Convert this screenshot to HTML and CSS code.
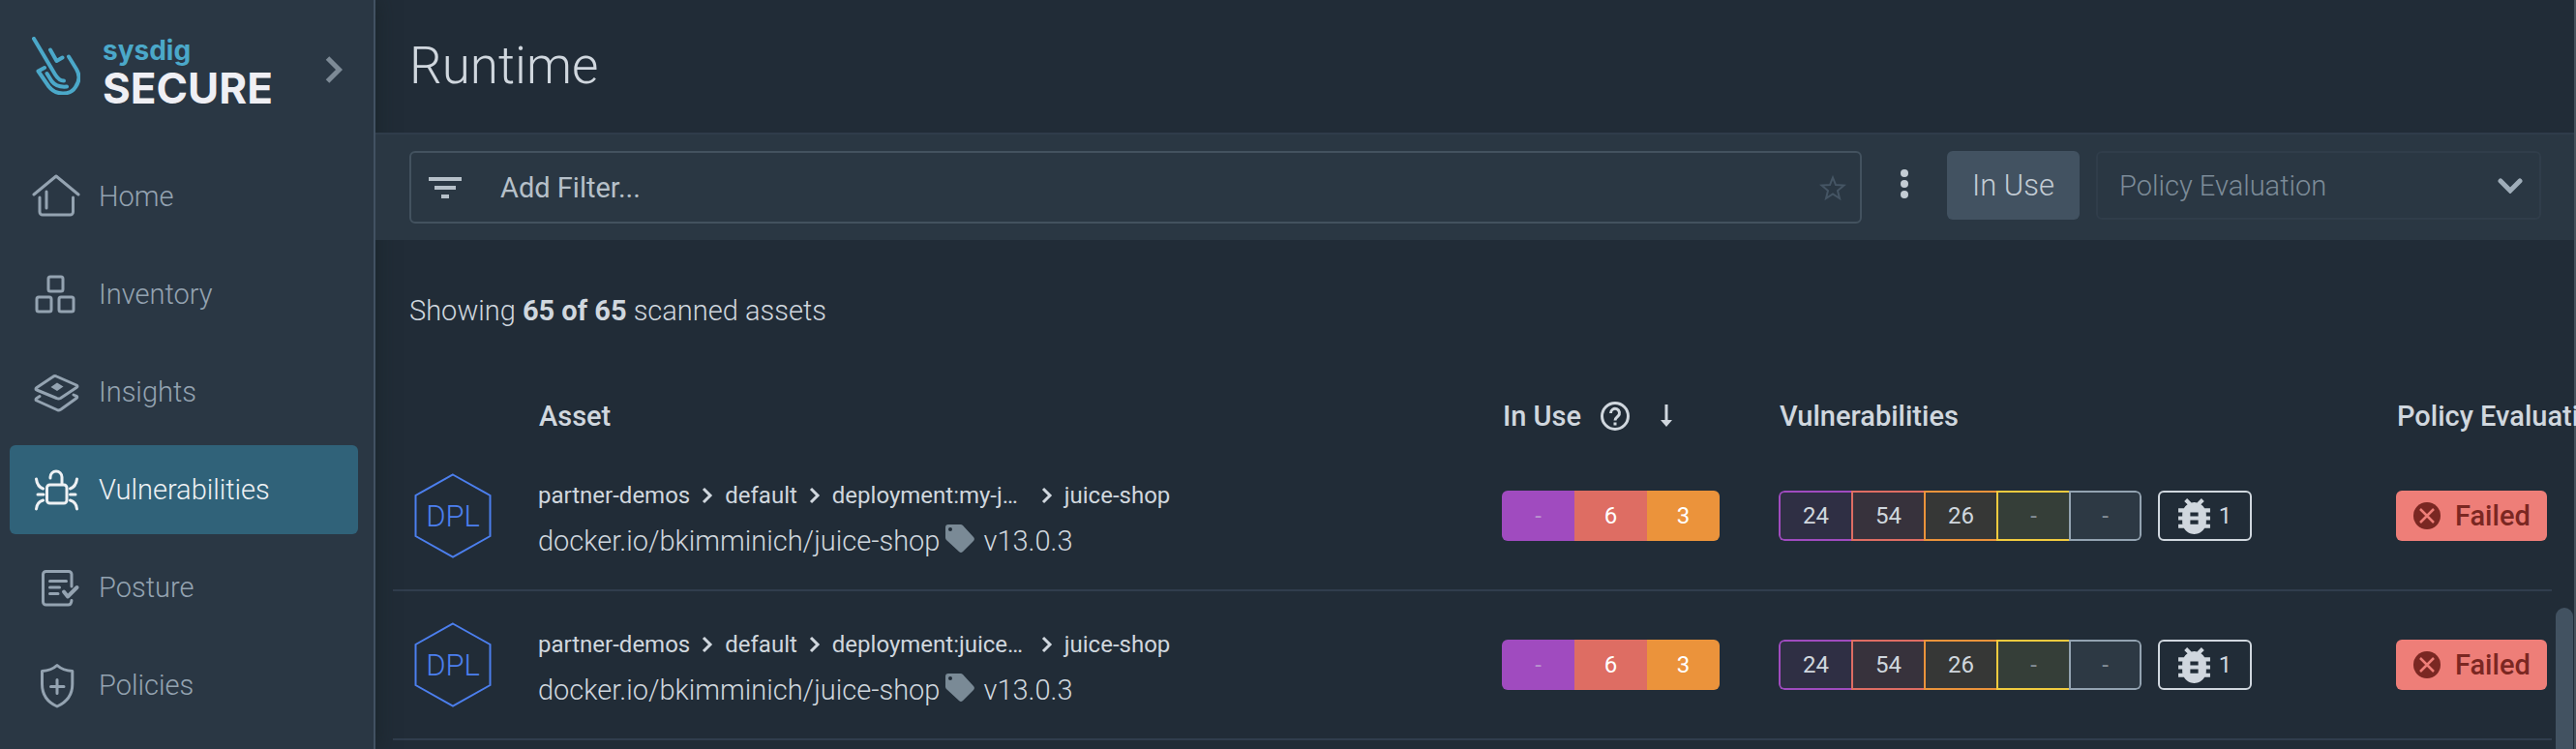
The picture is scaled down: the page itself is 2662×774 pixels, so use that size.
FILE: index.html
```html
<!DOCTYPE html>
<html lang="en">
<head>
<meta charset="utf-8">
<title>Sysdig Secure - Runtime</title>
<link rel="stylesheet" href="styles.css">
</head>
<body>
<svg class="sprite" aria-hidden="true">
  <symbol id="chevron" viewBox="0 0 12 18"><path d="M2 2l7 7-7 7" fill="none" stroke="currentColor" stroke-width="3"/></symbol>
  <symbol id="tag" viewBox="0 0 30 30"><path d="M0 3a3 3 0 0 1 3-3h12a4 4 0 0 1 3 1l11 12a3 3 0 0 1 0 4L18 28a3 3 0 0 1-4 0L1 16a4 4 0 0 1-1-3zM5 3a2 2 0 1 0 0 4 2 2 0 0 0 0-4z" fill="currentColor" fill-rule="evenodd"/></symbol>
  <symbol id="bug" viewBox="4 3 16 18"><path d="M20 8h-2.81a5.985 5.985 0 0 0-1.82-1.96L17 4.41 15.59 3l-2.17 2.17a6.002 6.002 0 0 0-2.83 0L8.41 3 7 4.41l1.62 1.63C7.88 6.55 7.26 7.22 6.81 8H4v2h2.09c-.05.33-.09.66-.09 1v1H4v2h2v1c0 .34.04.67.09 1H4v2h2.81c1.04 1.79 2.97 3 5.19 3s4.15-1.21 5.19-3H20v-2h-2.09c.05-.33.09-.66.09-1v-1h2v-2h-2v-1c0-.34-.04-.67-.09-1H20V8zm-6 8h-4v-2h4v2zm0-4h-4v-2h4v2z" fill="currentColor"/></symbol>
  <symbol id="failed" viewBox="0 0 28 28"><circle cx="14" cy="14" r="14" fill="currentColor"/><path d="M7 7l14 14M21 7L7 21" stroke="#ee7e78" stroke-width="2.500"/></symbol>
</svg>
<div class="app">
  <aside class="sidebar">
    <div class="brand">
      <svg class="brand-mark" viewBox="0 0 50 60" aria-hidden="true"><path d="M2 2L24 39Q28 45.500 33 45.500M19 13.500l6.500 11.500 6-3.500M38 20.500l8 13c3.500 6 3 13-1 18.500-3 5-8 6.500-13 6.500-6 0-11-2.500-14.500-7L6.500 35.500l6.500-3.500M15.500 38l5 8q5 6.500 15.500 5.500"/></svg>
      <div class="brand-name"><span class="brand-top">sysdig</span><span class="brand-bottom">SECURE</span></div>
      <button class="expand" aria-label="Expand navigation"><svg viewBox="0 0 18 28"><path d="M2.500 2l12 12-12 12"/></svg></button>
    </div>
    <nav class="nav">
      <a class="nav-item" href="#home"><svg viewBox="0 0 50 50"><path d="M2 23L25 4l23 19M8 26v15a3 3 0 0 0 3 3h28.500a3 3 0 0 0 3-3V26M15 20v17"/></svg>Home</a>
      <a class="nav-item" href="#inventory"><svg viewBox="0 0 50 50"><rect x="17" y="7" width="15" height="15" rx="2"/><rect x="5" y="28" width="15" height="15" rx="2"/><rect x="28" y="28" width="15" height="15" rx="2"/></svg>Inventory</a>
      <a class="nav-item" href="#insights"><svg viewBox="0 0 50 50"><path d="M21.500 9.500q2-1.500 4-.5L46 18q2 1 0 2.500L29.500 31.500q-2 1-4 0L5 23q-2-1 0-2.500zM8 29.500l-3 2q-2 1.500 0 2.500l22 10q1.500 0 3-1l16-11.500q2-1.500-1-2.500l-2-1"/><path class="solid" d="M26 15.500l6.500 4-6.500 4.500-6.500-4z"/></svg>Insights</a>
      <a class="nav-item active" href="#vulnerabilities" aria-current="page"><svg viewBox="0 0 50 50"><rect x="15.500" y="20" width="20.500" height="19" rx="3"/><path d="M19 13v-1a6 6 0 0 1 12 0v7M4.500 14q1 8 7 10M46.500 14q-1 8-7 10M6 30h6M39.500 30H45M4.500 45q.5-7 7-9M46.500 45q-.5-7-7-9"/></svg>Vulnerabilities</a>
      <a class="nav-item" href="#posture"><svg viewBox="0 0 50 50"><path d="M41 24V11.500a3 3 0 0 0-3-3H14.500a3 3 0 0 0-3 3V40a3 3 0 0 0 3 3H37.500q3 0 3.500-4.500M18.500 18.500h17M18.500 25h10M18.500 31.500h8.500"/><path class="heavy" d="M33 29.500l4 5 9.500-9.500"/></svg>Posture</a>
      <a class="nav-item" href="#policies"><svg viewBox="0 0 50 50"><path d="M26 4.500Q20 10 10.500 10.500V24C10.500 36 17 43 26 47 35 43 41.800 36 41.800 24V10.500Q32 10 26 4.500zM26 19.500v14M19.500 26.500h13.500"/></svg>Policies</a>
    </nav>
  </aside>
  <main class="main">
    <header class="page-header"><h1>Runtime</h1></header>
    <div class="toolbar">
      <div class="filter">
        <svg class="filter-icon" viewBox="0 0 34 22" aria-hidden="true"><path d="M0 0h34v4H0zM6 9h22v4H6zM13 18h8v4h-8z"/></svg>
        <input type="text" placeholder="Add Filter..." aria-label="Add Filter">
        <button class="star" aria-label="Save as favorite"><svg viewBox="0 0 28 26"><path d="M14 2.500l3 7.500 8.500.5-6.500 5.500 2 8L14 19.500 7 24l2-8-6.500-5.500L11 10z"/></svg></button>
      </div>
      <button class="kebab" aria-label="More options"><svg viewBox="0 0 8 30"><circle cx="4" cy="4" r="4"/><circle cx="4" cy="15" r="4"/><circle cx="4" cy="26" r="4"/></svg></button>
      <button class="in-use">In Use</button>
      <div class="select">
        <select aria-label="Policy Evaluation"><option>Policy Evaluation</option></select>
        <svg viewBox="0 0 26 16" aria-hidden="true"><path d="M3 3l10 10L23 3"/></svg>
      </div>
    </div>
    <p class="summary">Showing <strong>65 of 65</strong> scanned assets</p>
    <table class="assets">
      <colgroup><col class="col-icon"><col><col class="col-use"><col class="col-vuln"><col class="col-policy"></colgroup>
      <thead>
        <tr>
          <th aria-label="Type"></th>
          <th>Asset</th>
          <th><div class="sortable">In Use
            <svg class="help" viewBox="0 0 30 30"><circle cx="15" cy="15" r="13.500"/><path d="M10.500 12a4.500 4.500 0 1 1 7.500 3.200c-2 1.800-3 2.300-3 4.300M15 21.500v3"/></svg>
            <svg class="arrow" viewBox="0 0 14 24"><path d="M7 0v19" /><path class="head" d="M1 16h12l-6 7z"/></svg></div></th>
          <th>Vulnerabilities</th>
          <th>Policy Evaluation</th>
        </tr>
      </thead>
      <tbody>
        <tr>
          <td><svg class="hex" viewBox="0 0 80 88"><path d="M40 1.500L78.500 23v42L40 86.500 1.500 65V23z"/><text x="40" y="55">DPL</text></svg></td>
          <td class="asset">
            <div class="path"><span>partner-demos</span><svg><use href="#chevron"/></svg><span>default</span><svg><use href="#chevron"/></svg><span class="workload">deployment:my-j…</span><svg><use href="#chevron"/></svg><span>juice-shop</span></div>
            <div class="image">docker.io/bkimminich/juice-shop<svg><use href="#tag"/></svg>v13.0.3</div>
          </td>
          <td><div class="counts solid"><span class="critical none">-</span><span class="high">6</span><span class="medium">3</span></div></td>
          <td><div class="vulns"><div class="counts outline"><span class="critical">24</span><span class="high">54</span><span class="medium">26</span><span class="low none">-</span><span class="negligible none">-</span></div><span class="exploit"><svg><use href="#bug"/></svg>1</span></div></td>
          <td><span class="status"><svg><use href="#failed"/></svg>Failed</span></td>
        </tr>
        <tr>
          <td><svg class="hex" viewBox="0 0 80 88"><path d="M40 1.500L78.500 23v42L40 86.500 1.500 65V23z"/><text x="40" y="55">DPL</text></svg></td>
          <td class="asset">
            <div class="path"><span>partner-demos</span><svg><use href="#chevron"/></svg><span>default</span><svg><use href="#chevron"/></svg><span class="workload">deployment:juice…</span><svg><use href="#chevron"/></svg><span>juice-shop</span></div>
            <div class="image">docker.io/bkimminich/juice-shop<svg><use href="#tag"/></svg>v13.0.3</div>
          </td>
          <td><div class="counts solid"><span class="critical none">-</span><span class="high">6</span><span class="medium">3</span></div></td>
          <td><div class="vulns"><div class="counts outline"><span class="critical">24</span><span class="high">54</span><span class="medium">26</span><span class="low none">-</span><span class="negligible none">-</span></div><span class="exploit"><svg><use href="#bug"/></svg>1</span></div></td>
          <td><span class="status"><svg><use href="#failed"/></svg>Failed</span></td>
        </tr>
      </tbody>
    </table>
    <div class="scroll-thumb"></div>
  </main>
</div>
</body>
</html>
```

FILE: styles.css
```css
* { box-sizing: border-box; }
body {
  margin: 0;
  background: #212c37;
  color: #d0d7de;
  font-family: Roboto, "Liberation Sans", sans-serif;
  font-size: 29px;
  font-weight: 300;
}
button, input, select { font: inherit; color: inherit; border: 0; background: none; padding: 0; margin: 0; }
.sprite { display: none; }
.app { display: flex; height: 100vh; overflow: hidden; }

/* Sidebar */
.sidebar {
  flex: none;
  width: 388px;
  background: #2a3744;
  border-right: 2px solid #425262;
  box-shadow: 0 0 20px rgba(20, 32, 32, 0.6);
  z-index: 1;
}
.brand { display: flex; align-items: flex-start; height: 157px; padding: 38px 32px 0 33px; }
.brand-mark { width: 50px; height: 60px; fill: none; stroke: #4ba8c9; stroke-width: 4; stroke-linecap: round; stroke-linejoin: round; }
.brand-name { display: flex; flex-direction: column; margin-left: 23px; font-family: Inter, sans-serif; }
.brand-top { font-size: 28px; line-height: 28px; font-weight: 700; color: #4ba8c9; }
.brand-bottom { font-size: 44px; line-height: 50px; font-weight: 700; color: #efeff4; }
.expand { margin: 20px 0 0 auto; height: 28px; }
.expand svg { display: block; width: 18px; height: 28px; fill: none; stroke: #7d8a96; stroke-width: 5; }
.nav { display: flex; flex-direction: column; gap: 9px; padding: 0 16px 0 10px; }
.nav-item {
  display: flex;
  align-items: center;
  gap: 19px;
  height: 92px;
  padding-left: 23px;
  border-radius: 6px;
  color: #94a3b1;
  text-decoration: none;
}
.nav-item svg { width: 50px; height: 50px; fill: none; stroke: currentColor; stroke-width: 3; stroke-linecap: round; stroke-linejoin: round; }
.nav-item .solid { fill: currentColor; stroke: none; }
.nav-item .heavy { stroke-width: 4; }
.nav-item.active { background: #306279; color: #eef1f4; }

/* Main column */
.main { position: relative; flex: 1; min-width: 0; border-right: 2px solid #47525c; }
.page-header { height: 137px; padding: 35px 35px 0; }
h1 { margin: 0; font-size: 53px; line-height: 66px; font-weight: 300; }
.toolbar {
  position: relative;
  z-index: 2;
  display: flex;
  align-items: flex-start;
  padding: 17px 34px 17px 35px;
  background: #2a3743;
  border-top: 2px solid #2f3c4a;
}
.filter { flex: 1; display: flex; align-items: center; height: 75px; padding: 0 14px 0 18px; border: 2px solid #43525f; border-radius: 6px; }
.filter-icon { width: 34px; height: 22px; fill: #b6c0c9; }
.filter input { flex: 1; min-width: 0; margin-left: 40px; font-weight: 400; outline: 0; }
.filter input::placeholder { color: #b6c0c9; opacity: 1; }
.star svg { display: block; width: 28px; height: 26px; fill: none; stroke: #455564; stroke-width: 2; }
.kebab { width: 88px; height: 75px; }
.kebab svg { width: 8px; height: 30px; fill: #c3ccd4; }
.in-use { width: 137px; height: 71px; margin-right: 17px; border-radius: 6px; background: #425261; color: #c3ccd4; font-size: 31px; }
.select { display: grid; align-items: center; width: 460px; height: 71px; }
.select select, .select svg { grid-area: 1 / 1; }
.select select { appearance: none; height: 71px; padding: 0 22px; border: 2px solid #303d4a; border-radius: 6px; color: #7c8b98; }
.select svg { justify-self: end; width: 26px; height: 16px; margin-right: 19px; fill: none; stroke: #9fadb9; stroke-width: 5; stroke-linecap: round; pointer-events: none; }
.summary { margin: 0; padding: 51px 35px 60px; line-height: 44px; }
.summary strong { font-weight: 700; }

/* Asset table */
.assets { width: calc(100% - 41px); margin-left: 18px; border-collapse: separate; border-spacing: 0; table-layout: fixed; }
.col-icon { width: 150px; }
.col-use { width: 286px; }
.col-vuln { width: 638px; }
.col-policy { width: 161px; }
th { height: 54px; padding: 0 1px; text-align: left; font-weight: 500; white-space: nowrap; }
td { height: 154px; padding: 0; border-bottom: 2px solid #303d4d; }
td.asset { padding-top: 5px; }
.sortable { display: flex; align-items: center; }
.help { width: 30px; height: 30px; margin: 0 31px 0 20px; fill: none; stroke: currentColor; stroke-width: 3; }
.arrow { width: 14px; height: 24px; fill: none; stroke: currentColor; stroke-width: 3; }
.arrow .head { fill: currentColor; stroke: none; }
.hex { display: block; width: 80px; height: 88px; margin-left: 22px; }
.hex path { fill: none; stroke: #4c7fee; stroke-width: 2; }
.hex text { fill: #4c7fee; font-size: 31px; text-anchor: middle; }
.path { display: flex; align-items: center; font-size: 24px; line-height: 47px; font-weight: 400; white-space: nowrap; }
.path svg { width: 12px; height: 18px; margin: 0 12px; }
.workload { width: 204px; }
.image { display: flex; align-items: center; line-height: 47px; white-space: nowrap; }
.image svg { width: 30px; height: 30px; margin: 0 9px 4px 6px; color: #7a8a96; }
.counts { display: flex; border-radius: 6px; overflow: hidden; font-size: 24px; font-weight: 400; }
.counts span { width: 75px; height: 52px; line-height: 52px; text-align: center; }
.solid.counts { width: 225px; color: #fff; }
.solid .critical { background: #a04bbf; }
.solid .high { background: #de6d63; }
.solid .medium { background: #eb933b; }
.counts .none { color: rgba(208, 215, 222, 0.55); }
.outline span { border: 2px solid; border-right: 0; line-height: 48px; }
.outline .critical { border-color: #a04bbf; background: #2f2f44; border-radius: 6px 0 0 6px; }
.outline .high { border-color: #de6d63; background: #37323c; }
.outline .medium { border-color: #eb933b; background: #363736; }
.outline .low { border-color: #f1cb3f; background: #353e38; }
.outline .negligible { border: 2px solid #93a3b1; background: #2d3944; border-radius: 0 6px 6px 0; }
.counts.outline span { color: #d0d7de; }
.counts.outline .none { color: #87919a; }
.vulns { display: flex; gap: 17px; }
.exploit { display: flex; align-items: center; justify-content: center; gap: 9px; width: 97px; height: 52px; border: 2px solid #d0d7de; border-radius: 6px; font-size: 24px; font-weight: 400; }
.exploit svg { width: 33px; height: 37px; }
.status { display: flex; align-items: center; gap: 15px; width: 156px; height: 52px; padding-left: 18px; border-radius: 6px; background: #ee7e78; color: #7a2722; font-weight: 500; }
.status svg { width: 28px; height: 28px; }
.scroll-thumb { position: absolute; top: 628px; right: 1px; bottom: 0; width: 18px; border-radius: 9px 9px 0 0; background: #425261; }
```
